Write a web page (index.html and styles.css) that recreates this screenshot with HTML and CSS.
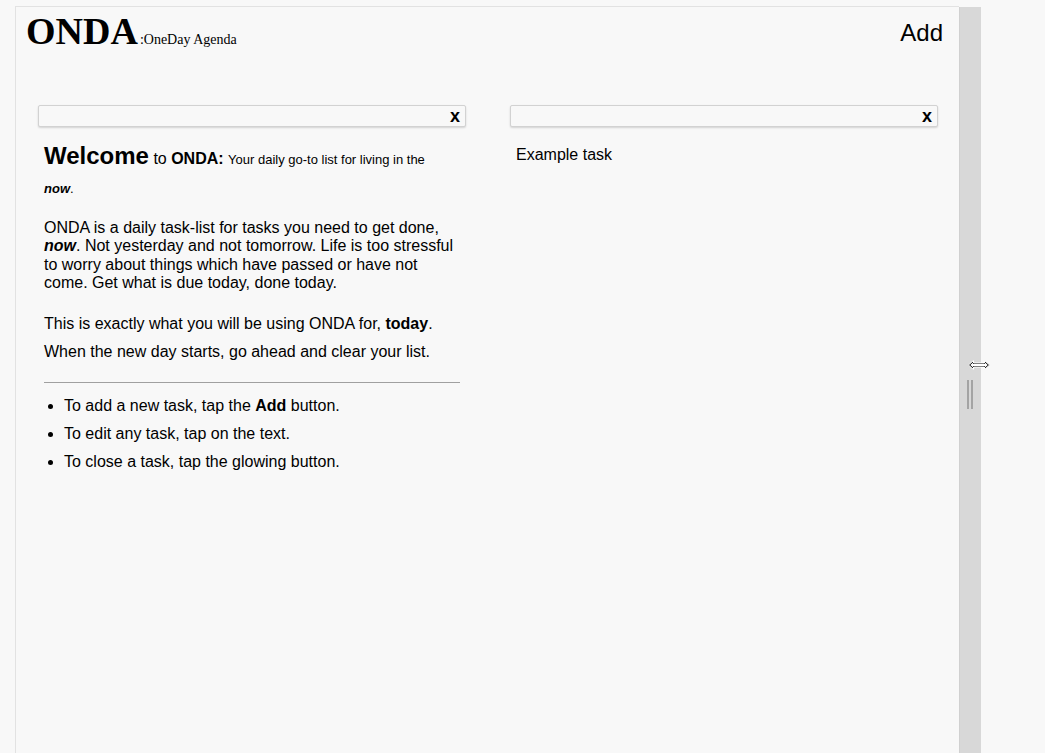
FILE: index.html
```html
<!DOCTYPE html>
<html>
<head>
<meta charset="utf-8">
<title>ONDA</title>
<link rel="stylesheet" href="styles.css">
</head>
<body>
<div class="app">
  <main class="panel">
    <header class="header">
      <div class="brand"><span class="logo">ONDA</span><span class="tagline">:OneDay Agenda</span></div>
      <div class="add">Add</div>
    </header>
    <section class="columns">
      <div class="column">
        <div class="card"><span class="close">x</span></div>
        <div class="content">
          <h2 class="welcome"><span class="big">Welcome</span> to <b>ONDA:</b> <span class="small">Your daily go-to list for living in the <b><i>now</i></b>.</span></h2>
          <p class="intro">ONDA is a daily task-list for tasks you need to get done, <b><i>now</i></b>. Not yesterday and not tomorrow. Life is too stressful to worry about things which have passed or have not come. Get what is due today, done today.</p>
          <p class="tall">This is exactly what you will be using ONDA for, <b>today</b>.<br>When the new day starts, go ahead and clear your list.</p>
          <hr class="rule">
          <ul class="tips">
            <li>To add a new task, tap the <b>Add</b> button.</li>
            <li>To edit any task, tap on the text.</li>
            <li>To close a task, tap the glowing button.</li>
          </ul>
        </div>
      </div>
      <div class="column">
        <div class="card"><span class="close">x</span></div>
        <div class="content">
          <p class="task">Example task</p>
        </div>
      </div>
    </section>
  </main>
  <div class="divider">
    <div class="grip"><span></span><span></span></div>
    <svg class="cursor" width="24" height="12" viewBox="0 0 24 12">
      <path d="M1.5 6 L6.5 1.5 L6.5 4 L17.5 4 L17.5 1.5 L22.5 6 L17.5 10.5 L17.5 8 L6.5 8 L6.5 10.5 Z" fill="#000" stroke="#fff" stroke-width="1"/>
      <path d="M3.2 6 L6 3.5 L6 5 L18 5 L18 3.5 L20.8 6 L18 8.5 L18 7 L6 7 L6 8.5 Z" fill="#fff"/>
    </svg>
  </div>
</div>
</body>
</html>
```

FILE: styles.css
```css
html, body {
  margin: 0;
  padding: 0;
  background: #f8f8f8;
  height: 100%;
  overflow: hidden;
}

body {
  font-family: "Liberation Sans", Arial, sans-serif;
  color: #000;
}

.app {
  display: flex;
  align-items: stretch;
  height: 100vh;
  padding: 6px 0 0 15px;
  box-sizing: border-box;
}

.panel {
  width: 943px;
  flex: none;
  border-left: 1px solid #e2e2e2;
  border-top: 1px solid #e2e2e2;
  background: #f8f8f8;
}

.header {
  display: flex;
  justify-content: space-between;
  align-items: flex-start;
  padding: 2px 16px 0 10px;
  height: 52px;
}

.brand {
  display: flex;
  align-items: baseline;
  font-family: "Liberation Serif", "Times New Roman", serif;
  line-height: 44px;
}

.logo {
  font-size: 38px;
  font-weight: bold;
}

.tagline {
  font-size: 14px;
  margin-left: 2px;
}

.add {
  font-size: 24px;
  line-height: 28px;
  margin-top: 10px;
}

.columns {
  display: grid;
  grid-template-columns: 428px 428px;
  column-gap: 44px;
  padding: 44px 21px 0 22px;
}

.card {
  height: 22px;
  box-sizing: border-box;
  border: 1px solid #d2d2d2;
  border-radius: 2px;
  box-shadow: 0 1px 2px rgba(0, 0, 0, 0.15);
  background: #f8f8f8;
  display: flex;
  justify-content: flex-end;
  align-items: center;
  padding-right: 5px;
}

.close {
  font-weight: bold;
  font-size: 18px;
  line-height: 20px;
}

.content {
  padding: 0 6px;
}

.welcome {
  margin: 15px 0 0;
  max-width: 400px;
  font-size: 16px;
  font-weight: normal;
  line-height: 28px;
}

.welcome .big {
  font-size: 24px;
  font-weight: bold;
}

.welcome .small {
  font-size: 13px;
}

.intro {
  margin: 16px 0 0;
  font-size: 16px;
  line-height: 18.4px;
}

.tall {
  margin: 17px 0 0;
  font-size: 16px;
  line-height: 28px;
}

.rule {
  margin: 16px 0 0;
  border: none;
  border-top: 1px solid #a0a0a0;
  height: 0;
}

.tips {
  margin: 9px 0 0;
  padding-left: 20px;
  font-size: 16px;
  line-height: 28px;
}

.task {
  margin: 18px 0 0;
  font-size: 16px;
  line-height: 20px;
}

.divider {
  width: 22px;
  flex: none;
  margin-top: 1px;
  background: #d8d8d8;
  border-left: 1px solid #d0d0d0;
  box-sizing: border-box;
  position: relative;
}

.grip {
  display: flex;
  gap: 2px;
  margin: 373px 0 0 7px;
}

.grip span {
  width: 2px;
  height: 29px;
  background: #a4a4a4;
}

.cursor {
  position: absolute;
  left: 7px;
  top: 352px;
}
```
